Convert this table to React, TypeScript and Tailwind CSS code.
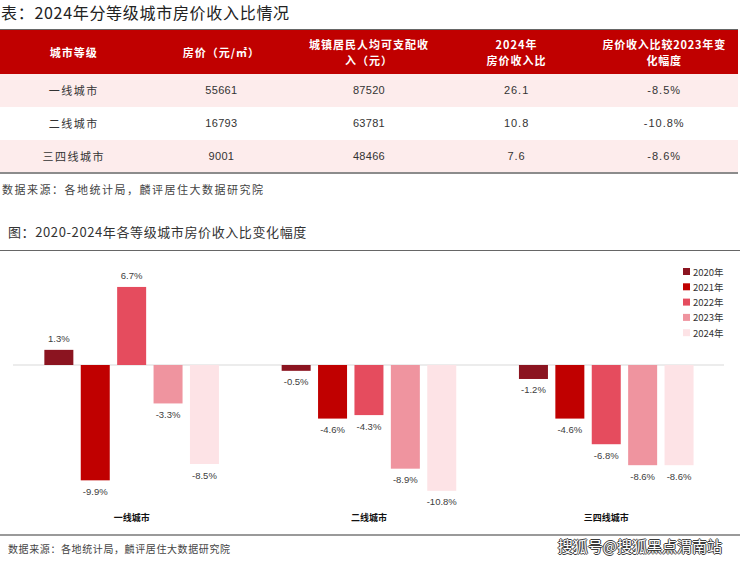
import React from 'react';

const CJK = '"Noto Sans CJK SC", "Liberation Sans", sans-serif';

const rows = [
  { city: '一线城市', price: '55661', income: '87520', ratio: '26.1', change: '-8.5%', pink: true },
  { city: '二线城市', price: '16793', income: '63781', ratio: '10.8', change: '-10.8%', pink: false },
  { city: '三四线城市', price: '9001', income: '48466', ratio: '7.6', change: '-8.6%', pink: true },
];

const series = [
  { name: '2020年', color: '#8b1420' },
  { name: '2021年', color: '#c00000' },
  { name: '2022年', color: '#e54c5e' },
  { name: '2023年', color: '#ef949f' },
  { name: '2024年', color: '#fde3e6' },
];

const groups = [
  { label: '一线城市', values: [1.3, -9.9, 6.7, -3.3, -8.5] },
  { label: '二线城市', values: [-0.5, -4.6, -4.3, -8.9, -10.8] },
  { label: '三四线城市', values: [-1.2, -4.6, -6.8, -8.6, -8.6] },
];

const ZERO = 114;
const SCALE = 11.65;
const BAR_W = 29;
const STEP = 36.4;
const fmt = (v: number) => `${v.toFixed(1)}%`;

const Chart: React.FC = () => (
  <svg width={740} height={285} className="block">
    <line x1={13} x2={724} y1={ZERO} y2={ZERO} stroke="#d9d9d9" strokeWidth={1} />
    {groups.map((g, gi) => {
      const center = 13 + 237.3 * (gi + 0.5);
      return (
        <g key={g.label}>
          {g.values.map((v, j) => {
            const x = center + (j - 2) * STEP - BAR_W / 2;
            const h = Math.abs(v) * SCALE;
            const y = v >= 0 ? ZERO - h : ZERO;
            const ly = v >= 0 ? ZERO - h - 11 : ZERO + h + 11;
            return (
              <g key={j}>
                <rect x={x} y={y} width={BAR_W} height={h} fill={series[j].color} />
                <text
                  x={x + BAR_W / 2}
                  y={ly}
                  dominantBaseline="central"
                  textAnchor="middle"
                  fontSize={9.5}
                  fill="#404040"
                  fontFamily='"Liberation Sans", sans-serif'
                >
                  {fmt(v)}
                </text>
              </g>
            );
          })}
          <text
            x={center}
            y={266}
            dominantBaseline="central"
            textAnchor="middle"
            fontSize={9}
            fontWeight={700}
            fill="#111"
            fontFamily={CJK}
          >
            {g.label}
          </text>
        </g>
      );
    })}
    {series.map((s, i) => (
      <g key={s.name}>
        <rect x={683} y={17 + i * 15.3} width={7} height={7} fill={s.color} />
        <text
          x={693}
          y={20.5 + i * 15.3}
          dominantBaseline="central"
          fontSize={9.5}
          fill="#333"
          fontFamily={CJK}
        >
          {s.name}
        </text>
      </g>
    ))}
  </svg>
);

const App: React.FC = () => {
  return (
    <div className="w-[740px] h-[564px] bg-white overflow-hidden text-[#333]" style={{ fontFamily: CJK }}>
      {/* Table title */}
      <div className="h-[29px] pt-[2px] pl-[1px] text-[16px] leading-[20px] tracking-[0.7px] text-[#222]">
        表：2024年分等级城市房价收入比情况
      </div>

      {/* Table */}
      <div className="w-[738px] border-t border-[#666] border-b-2 border-b-[#8c8c8c]">
        <div className="grid grid-cols-5 h-[44px] bg-[#c00000] text-white font-bold text-[11px] leading-[16px] tracking-[1px]">
          <div className="flex items-center justify-center">城市等级</div>
          <div className="flex items-center justify-center">房价（元/㎡）</div>
          <div className="flex items-center justify-center text-center whitespace-nowrap">
            城镇居民人均可支配收<br />入（元）
          </div>
          <div className="flex items-center justify-center text-center whitespace-nowrap">
            2024年<br />房价收入比
          </div>
          <div className="flex items-center justify-center text-center whitespace-nowrap tracking-[0.8px]">
            房价收入比较2023年变<br />化幅度
          </div>
        </div>
        {rows.map((r, i) => (
          <div
            key={r.city}
            className={`grid grid-cols-5 text-[11px] ${i === 2 ? 'h-[32px]' : 'h-[33px]'} ${r.pink ? 'bg-[#fdecec]' : 'bg-white'}`}
          >
            <div className="flex items-center justify-center tracking-[1.5px]">{r.city}</div>
            <div className="flex items-center justify-center tracking-[0.3px]" style={{ fontFamily: '"Liberation Sans", sans-serif' }}>{r.price}</div>
            <div className="flex items-center justify-center tracking-[0.3px]" style={{ fontFamily: '"Liberation Sans", sans-serif' }}>{r.income}</div>
            <div className="flex items-center justify-center tracking-[1px]" style={{ fontFamily: '"Liberation Sans", sans-serif' }}>{r.ratio}</div>
            <div className="flex items-center justify-center tracking-[1px]" style={{ fontFamily: '"Liberation Sans", sans-serif' }}>{r.change}</div>
          </div>
        ))}
      </div>

      {/* Table source */}
      <div className="h-[30px] pl-[2px] text-[11px] leading-[30px] tracking-[1.5px] text-[#444]">
        数据来源：各地统计局，麟评居住大数据研究院
      </div>

      {/* Chart title */}
      <div className="h-[47px] pt-[19px] pl-[8px] text-[13px] leading-[18px] tracking-[0.6px] text-[#333] border-b-[1.5px] border-[#666]">
        图：2020-2024年各等级城市房价收入比变化幅度
      </div>

      {/* Chart */}
      <div className="h-[285px] border-b-2 border-[#9a9a9a]">
        <Chart />
      </div>

      {/* Footer */}
      <div className="h-[27px] flex justify-between">
        <div className="pl-[8px] text-[10px] leading-[25px] tracking-[0.6px] text-[#444]">
          数据来源：各地统计局，麟评居住大数据研究院
        </div>
        <div className="pr-[18px] text-[15px] leading-[20px] text-white [text-shadow:1px_0_0_#3a3a3a,-1px_0_0_#3a3a3a,0_1px_0_#3a3a3a,0_-1px_0_#3a3a3a]">
          搜狐号@搜狐黑点渭南站
        </div>
      </div>
    </div>
  );
};

export default App;
